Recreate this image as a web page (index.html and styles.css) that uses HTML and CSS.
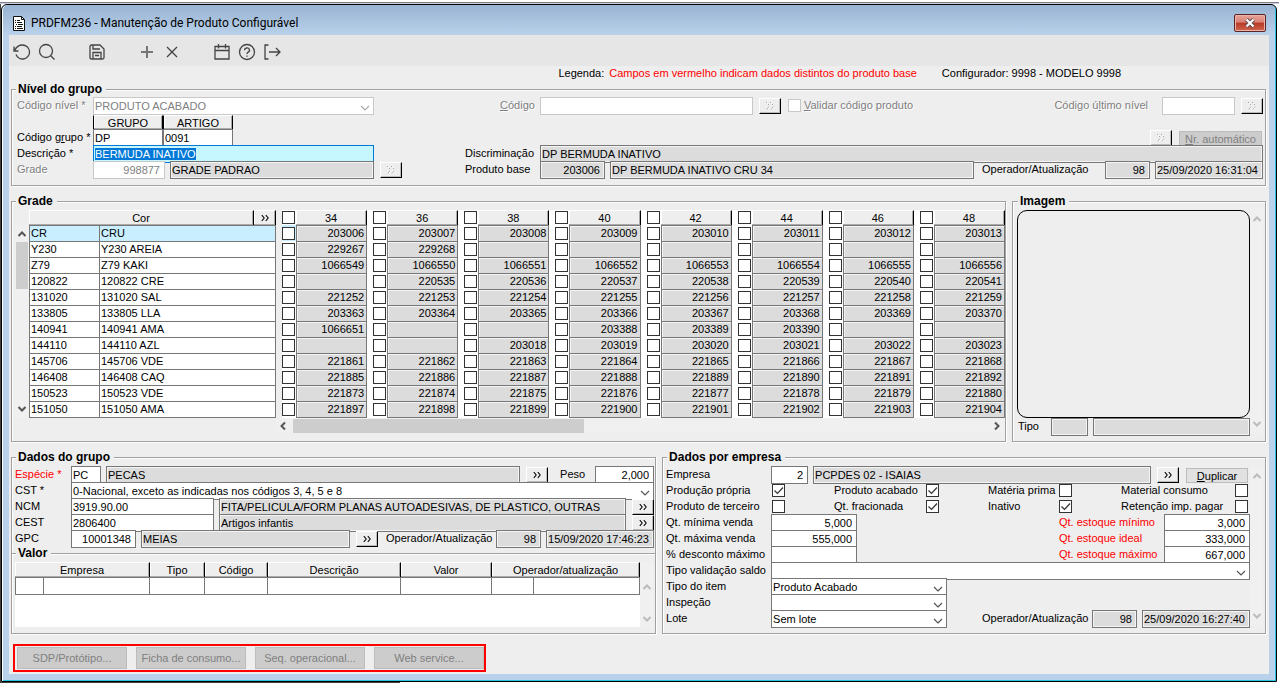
FILE: index.html
```
<!DOCTYPE html>
<html lang="pt-BR">

<head>
    <title>PRDFM236 - Manutenção de Produto Configurável</title>
    <meta charset="UTF-8">
    <meta name="viewport" content="width=device-width, initial-scale=1.0">
    <link rel="stylesheet" href="styles.css">
</head>

<body>
    <svg class="symbols" aria-hidden="true">
        <symbol id="more" viewBox="0 0 12 10"><path d="M2 1.500l3 3.500-3 3.500M7 1.500l3 3.500-3 3.500" fill="none" stroke="currentColor" stroke-width="1.300"/></symbol>
        <symbol id="more-off" viewBox="0 0 12 10"><path d="M2 1.500h1M4 3.500h1M6 1.500h1M8 3.500h1M5 5.500l-2 3M10 5.500l-3 3" fill="none" stroke="#a8a8a8"/><path d="M3 2.500h1M7 2.500h1M6 5.500l-2 3M11 5.500l-3 3" fill="none" stroke="#fff"/></symbol>
        <symbol id="up" viewBox="0 0 10 8"><path d="M1.500 6L5 2.500 8.500 6" fill="none" stroke="currentColor" stroke-width="2"/></symbol>
        <symbol id="down" viewBox="0 0 10 8"><path d="M1.500 2L5 5.500 8.500 2" fill="none" stroke="currentColor" stroke-width="2"/></symbol>
        <symbol id="left" viewBox="0 0 8 10"><path d="M6 1.500L2.500 5 6 8.500" fill="none" stroke="currentColor" stroke-width="2"/></symbol>
        <symbol id="right" viewBox="0 0 8 10"><path d="M2 1.500L5.500 5 2 8.500" fill="none" stroke="currentColor" stroke-width="2"/></symbol>
    </svg>

    <div class="window">
        <header class="titlebar">
            <svg class="doc-icon" viewBox="0 0 12 15"><path d="M.5.5h8l3 3v11H.5z" fill="#fff" stroke="#111"/><path d="M8.500.5v3h3M2 4.500h1M4 4.500h3M2 6.500h1M4 6.500h5M3 8.500h1M5 8.500h5M2 10.500h1M4 10.500h5M2 12.500h1M4 12.500h6" fill="none" stroke="#111"/></svg>
            <h1>PRDFM236 - Manutenção de Produto Configurável</h1>
            <button class="close" aria-label="Fechar">
                <svg viewBox="0 0 12 10"><path d="M2.500 1.500l7 7M9.500 1.500l-7 7" stroke="#5c4a50" stroke-width="4"/><path d="M2.500 1.500l7 7M9.500 1.500l-7 7" stroke="#fff" stroke-width="2.200"/></svg>
            </button>
        </header>

        <main>
            <div class="toolbar">
                <button aria-label="Desfazer"><svg viewBox="0 0 18 18"><path d="M1 3.500v4.500h4.500M1.500 7.500C3.500 3.500 6.500 2 9.500 2a7 7 0 1 1-6.500 9.500"/></svg></button>
                <button aria-label="Pesquisar"><svg viewBox="0 0 18 18"><circle cx="8" cy="8" r="6.500"/><path d="M12.700 12.700L16.500 16.500"/></svg></button>
                <button class="gap-before" aria-label="Salvar"><svg viewBox="0 0 18 18"><path d="M2 3.500Q2 2 3.500 2H12l4 4v8.500q0 1.500-1.500 1.500h-11Q2 16 2 14.500zM5 16V9.500h8V16M5 2v4h7M7 12.500h4"/></svg></button>
                <button class="gap-before" aria-label="Incluir"><svg viewBox="0 0 18 18"><path class="thick" d="M9 3v12M3 9h12"/></svg></button>
                <button aria-label="Excluir"><svg viewBox="0 0 18 18"><path d="M4 4l10 10M14 4L4 14"/></svg></button>
                <button class="gap-before" aria-label="Calendário"><svg viewBox="0 0 18 18"><path d="M2 3.500h14V16H2zM2 7.500h14M5.500 1v4.500M12.500 1v4.500"/></svg></button>
                <button aria-label="Ajuda"><svg viewBox="0 0 18 18"><circle cx="9" cy="9" r="7.500"/><path d="M6.500 7.200a2.500 2.200 0 1 1 3.700 1.900Q9 9.800 9 11M9 12.500v1.200"/></svg></button>
                <button aria-label="Sair"><svg viewBox="0 0 18 18"><path d="M5.500 2H2v14h3.500M6 9h10.500M13 5l4 4-4 4"/></svg></button>
            </div>

            <div class="notice">
                <span>Legenda:</span>
                <span class="red">Campos em vermelho indicam dados distintos do produto base</span>
                <span class="config">Configurador: 9998 - MODELO 9998</span>
            </div>

            <fieldset class="level">
                <legend>Nível do grupo</legend>
                <div class="row">
                    <label class="off" for="codNivel">Código nível *</label>
                    <select id="codNivel" class="w-select off" disabled><option>PRODUTO ACABADO</option></select>
                    <label class="off code" for="codigo"><u>C</u>ódigo</label>
                    <input id="codigo" class="w-code off" disabled>
                    <button class="more" disabled aria-label="Buscar código"><svg><use href="#more-off"/></svg></button>
                    <input id="validar" type="checkbox" class="off" disabled>
                    <label class="off validate" for="validar"><u>V</u>alidar código produto</label>
                    <label class="off push last-level" for="ultNivel">Código ú<u>l</u>timo nível</label>
                    <input id="ultNivel" class="w-last off" disabled>
                    <button class="more" disabled aria-label="Buscar último nível"><svg><use href="#more-off"/></svg></button>
                </div>
                <div class="row">
                    <span class="label"></span>
                    <span class="head w-part">GRUPO</span>
                    <span class="head w-part">ARTIGO</span>
                </div>
                <div class="row">
                    <label for="codGrupo">Código g<u>r</u>upo *</label>
                    <input id="codGrupo" class="w-part" value="DP">
                    <input class="w-part" value="0091" aria-label="Artigo">
                    <button class="more push" disabled aria-label="Buscar número"><svg><use href="#more-off"/></svg></button>
                    <button class="text-btn auto" disabled><u>N</u>r. automático</button>
                </div>
                <div class="row">
                    <label for="descricao">Descrição *</label>
                    <input id="descricao" class="w-desc focus" value="BERMUDA INATIVO">
                    <label class="second wide-gap" for="discr">Discriminação</label>
                    <input id="discr" class="grow ro" value="DP BERMUDA INATIVO" readonly>
                </div>
                <div class="row">
                    <label class="off" for="gradeCod">Grade</label>
                    <input id="gradeCod" class="w-grade num off" value="998877" disabled>
                    <input class="w-grade-name ro gap" value="GRADE PADRAO" readonly aria-label="Nome da grade">
                    <button class="more" disabled aria-label="Buscar grade"><svg><use href="#more-off"/></svg></button>
                    <label class="second base-gap" for="base">Produto base</label>
                    <input id="base" class="w-65 num ro" value="203006" readonly>
                    <input class="grow ro gap" value="DP BERMUDA INATIVO CRU 34" readonly aria-label="Nome do produto base">
                    <label class="oper" for="op1">Operador/Atualização</label>
                    <input id="op1" class="w-op num ro" value="98" readonly>
                    <input class="w-date ro gap" value="25/09/2020 16:31:04" readonly aria-label="Atualização">
                </div>
            </fieldset>

            <div class="columns">
                <fieldset class="grade grow">
                    <legend>Grade</legend>
                    <div class="grade-body">
                        <div class="vscroll active">
                            <svg><use href="#up"/></svg>
                            <span class="thumb"></span>
                            <svg><use href="#down"/></svg>
                        </div>
                        <table class="colors">
                            <colgroup><col class="c-code"><col><col class="c-more"></colgroup>
                            <thead><tr><th colspan="2"><span class="head">Cor</span></th><th><button class="head" aria-label="Buscar cor"><svg><use href="#more"/></svg></button></th></tr></thead>
                            <tbody id="colorRows"></tbody>
                        </table>
                        <div class="grow">
                            <table class="sizes">
                                <thead><tr id="sizeHead"></tr></thead>
                                <tbody id="sizeRows"></tbody>
                            </table>
                            <div class="hscroll">
                                <svg><use href="#left"/></svg>
                                <span class="track"><span class="thumb"></span></span>
                                <svg><use href="#right"/></svg>
                            </div>
                        </div>
                    </div>
                </fieldset>

                <fieldset class="image">
                    <legend>Imagem</legend>
                    <div class="with-scroll">
                        <div class="grow">
                            <div class="picture"></div>
                            <div class="row">
                                <label for="tipoImg">Tipo</label>
                                <input id="tipoImg" class="w-tipo ro" readonly>
                                <input class="grow ro gap" readonly aria-label="Descrição do tipo">
                            </div>
                        </div>
                        <div class="vscroll"><svg><use href="#up"/></svg><svg><use href="#down"/></svg></div>
                    </div>
                </fieldset>
            </div>

            <div class="columns">
                <div class="left-col">
                    <fieldset class="group">
                        <legend>Dados do grupo</legend>
                        <div class="row">
                            <label class="red" for="especie">Espécie *</label>
                            <input id="especie" class="w-30" value="PC">
                            <input class="grow ro gap" value="PECAS" readonly aria-label="Nome da espécie">
                            <button class="more" aria-label="Buscar espécie"><svg><use href="#more"/></svg></button>
                            <label class="peso" for="peso">Peso</label>
                            <input id="peso" class="w-peso num" value="2,000">
                        </div>
                        <div class="row">
                            <label for="cst">CST *</label>
                            <select id="cst" class="grow"><option>0-Nacional, exceto as indicadas nos códigos 3, 4, 5 e 8</option></select>
                        </div>
                        <div class="row">
                            <label for="ncm">NCM</label>
                            <input id="ncm" class="w-ncm" value="3919.90.00">
                            <input class="grow ro gap" value="FITA/PELICULA/FORM PLANAS AUTOADESIVAS, DE PLASTICO, OUTRAS" readonly aria-label="Descrição NCM">
                            <button class="more" aria-label="Buscar NCM"><svg><use href="#more"/></svg></button>
                        </div>
                        <div class="row">
                            <label for="cest">CEST</label>
                            <input id="cest" class="w-ncm" value="2806400">
                            <input class="grow ro gap" value="Artigos infantis" readonly aria-label="Descrição CEST">
                            <button class="more" aria-label="Buscar CEST"><svg><use href="#more"/></svg></button>
                        </div>
                        <div class="row">
                            <label for="gpc">GPC</label>
                            <input id="gpc" class="w-65 num" value="10001348">
                            <input class="grow ro gap" value="MEIAS" readonly aria-label="Descrição GPC">
                            <button class="more" aria-label="Buscar GPC"><svg><use href="#more"/></svg></button>
                            <label class="oper" for="op2">Operador/Atualização</label>
                            <input id="op2" class="w-op num ro" value="98" readonly>
                            <input class="w-date ro gap" value="15/09/2020 17:46:23" readonly aria-label="Atualização do grupo">
                        </div>
                    </fieldset>
                    <fieldset class="value">
                        <legend>Valor</legend>
                        <div class="with-scroll">
                            <div class="value-list grow">
                                <table>
                                    <colgroup><col class="v-28"><col><col class="v-55"><col class="v-63"><col class="v-133"><col class="v-91"><col class="v-42"><col class="v-106"></colgroup>
                                    <thead>
                                        <tr>
                                            <th colspan="2"><span class="head">Empresa</span></th>
                                            <th><span class="head">Tipo</span></th>
                                            <th><span class="head">Código</span></th>
                                            <th><span class="head">Descrição</span></th>
                                            <th><span class="head">Valor</span></th>
                                            <th colspan="2"><span class="head">Operador/atualização</span></th>
                                        </tr>
                                    </thead>
                                    <tbody><tr><td></td><td></td><td></td><td></td><td></td><td></td><td></td><td></td></tr></tbody>
                                </table>
                            </div>
                            <div class="vscroll"><svg><use href="#up"/></svg><svg><use href="#down"/></svg></div>
                        </div>
                    </fieldset>
                </div>

                <fieldset class="company">
                    <legend>Dados por empresa</legend>
                    <div class="with-scroll">
                        <div class="grow">
                            <div class="row">
                                <label for="empresa">Empresa</label>
                                <input id="empresa" class="w-emp num" value="2">
                                <input class="grow ro gap" value="PCPDES 02 - ISAIAS" readonly aria-label="Nome da empresa">
                                <button class="more" aria-label="Buscar empresa"><svg><use href="#more"/></svg></button>
                                <button class="text-btn dup"><u>D</u>uplicar</button>
                            </div>
                            <div class="row checks">
                                <label for="c1">Produção própria</label><input id="c1" type="checkbox" checked>
                                <label for="c2">Produto acabado</label><input id="c2" type="checkbox" checked>
                                <label for="c3">Matéria prima</label><input id="c3" type="checkbox">
                                <label for="c4">Material consumo</label><input id="c4" type="checkbox">
                            </div>
                            <div class="row checks">
                                <label for="c5">Produto de terceiro</label><input id="c5" type="checkbox">
                                <label for="c6">Qt. fracionada</label><input id="c6" type="checkbox" checked>
                                <label for="c7">Inativo</label><input id="c7" type="checkbox" checked>
                                <label for="c8">Retenção imp. pagar</label><input id="c8" type="checkbox">
                            </div>
                            <div class="row">
                                <label for="qmin">Qt. mínima venda</label>
                                <input id="qmin" class="w-qty num" value="5,000">
                                <label class="red push" for="emin">Qt. estoque mínimo</label>
                                <input id="emin" class="w-qty num" value="3,000">
                            </div>
                            <div class="row">
                                <label for="qmax">Qt. máxima venda</label>
                                <input id="qmax" class="w-qty num" value="555,000">
                                <label class="red push" for="eideal">Qt. estoque ideal</label>
                                <input id="eideal" class="w-qty num" value="333,000">
                            </div>
                            <div class="row">
                                <label for="desc">% desconto máximo</label>
                                <input id="desc" class="w-qty num">
                                <label class="red push" for="emax">Qt. estoque máximo</label>
                                <input id="emax" class="w-qty num" value="667,000">
                            </div>
                            <div class="row">
                                <label for="saldo">Tipo validação saldo</label>
                                <select id="saldo" class="grow"><option></option></select>
                            </div>
                            <div class="row">
                                <label for="item">Tipo do item</label>
                                <select id="item" class="w-combo"><option>Produto Acabado</option></select>
                            </div>
                            <div class="row">
                                <label for="insp">Inspeção</label>
                                <select id="insp" class="w-combo"><option></option></select>
                            </div>
                            <div class="row">
                                <label for="lote">Lote</label>
                                <select id="lote" class="w-combo"><option>Sem lote</option></select>
                                <label class="oper push" for="op3">Operador/Atualização</label>
                                <input id="op3" class="w-op num ro" value="98" readonly>
                                <input class="w-date ro gap" value="25/09/2020 16:27:40" readonly aria-label="Atualização da empresa">
                            </div>
                        </div>
                        <div class="vscroll"><svg><use href="#up"/></svg><svg><use href="#down"/></svg></div>
                    </div>
                </fieldset>
            </div>

            <div class="actions">
                <button disabled>SDP/Protótipo...</button>
                <button disabled>Ficha de consumo...</button>
                <button disabled>Seq. operacional...</button>
                <button disabled>Web service...</button>
            </div>
        </main>
    </div>

    <script src="grade.js"></script>
</body>

</html>
```

FILE: styles.css
```
* {
    box-sizing: border-box;
}

body {
    margin: 0;
    min-height: 100vh;
    padding: 4px 2px 1px 1px;
    background:
        linear-gradient(#fff 0 2px, #808080 2px 3px, #c9cde6 3px 4px) 0 0 / 100% 4px no-repeat,
        linear-gradient(#404040, #404040) 0 0 / 1px 100% no-repeat,
        linear-gradient(#404040, #404040) 0 100% / 400px 1px no-repeat,
        #fff;
    font: 11px/16px "Liberation Sans", Arial, sans-serif;
    color: #000;
}

button,
input,
select {
    margin: 0;
    font: inherit;
    color: inherit;
    border-radius: 0;
    flex: none;
}

.symbols {
    display: none;
}

.red {
    color: #f00;
}

.window {
    padding: 0 7px 7px;
    background: linear-gradient(#98b3d2, #b9d1ea 30px);
    border: 1px solid #000;
    border-radius: 6px 6px 0 0;
    box-shadow: inset 1px 0 0 #fff, inset -1px -1px 0 #2ac4e0;
}

.titlebar {
    display: flex;
    align-items: center;
    height: 30px;
    padding: 6px 3px 0 4px;
}

.doc-icon {
    width: 12px;
    height: 15px;
}

.titlebar h1 {
    margin: 0 auto 0 6px;
    font: 12px/16px Roboto, sans-serif;
}

.close {
    display: flex;
    align-items: center;
    justify-content: center;
    width: 32px;
    height: 18px;
    padding: 0;
    border: 1px solid #5d2224;
    border-radius: 2px;
    background: linear-gradient(#e8a49a, #d98275 45%, #b83a26 50%, #d0654f);
    box-shadow: inset 0 0 0 1px #e9b5ab;
}

.close svg {
    width: 12px;
    height: 10px;
}

main {
    background: #eee;
    padding: 0 3px 2px 2px;
}

.toolbar {
    display: flex;
    align-items: center;
    gap: 7px;
    height: 31px;
    margin: 0 -3px 0 -2px;
    padding: 2px 4px 0;
    background: #e6e6e6;
}

.toolbar button {
    display: flex;
    padding: 0;
    border: 0;
    background: none;
}

.toolbar .gap-before {
    margin-left: 25px;
}

.toolbar svg {
    width: 18px;
    height: 18px;
    fill: none;
    stroke: #444;
    stroke-width: 1.3;
}

.toolbar .thick {
    stroke: #777;
    stroke-width: 2;
}

.notice {
    display: flex;
    justify-content: flex-end;
    gap: 5px;
    height: 16px;
    padding-right: 145px;
    line-height: 14px;
}

.notice .config {
    margin-left: 20px;
}

/* group boxes */

fieldset {
    min-width: 0;
    margin: 0 0 8px;
    padding: 1px 2px 7px 3px;
    border: 1px solid #a0a0a0;
    box-shadow: 1px 1px 0 #fff, inset 1px 1px 0 #fff;
}

legend {
    margin-left: 1px;
    padding: 0 4px 0 2px;
    background: #eee;
    font: bold 12px/14px "Liberation Sans", Arial, sans-serif;
}

.columns {
    display: flex;
    gap: 6px;
}

.grow {
    flex: 1;
    min-width: 0;
}

/* fields are 2px taller than the row so their borders overlap */
.row {
    display: flex;
    align-items: flex-start;
    height: 16px;
}

.row label,
.row .label {
    flex: none;
}

.row label {
    line-height: 17px;
    white-space: nowrap;
}

.row input,
.row select {
    height: 18px;
    padding: 0 4px 0 1px;
    border: 1px solid #777;
    background-color: #fff;
    outline: 0;
}

.row select {
    appearance: none;
    padding: 0 1px 2px;
    background: #fff url("data:image/svg+xml,%3Csvg xmlns='http://www.w3.org/2000/svg' width='10' height='6'%3E%3Cpath d='M1 1l4 4 4-4' fill='none' stroke='%23555' stroke-width='1.2'/%3E%3C/svg%3E") no-repeat right 3px bottom 3px;
}

.row select:disabled {
    padding-bottom: 0;
    background-image: url("data:image/svg+xml,%3Csvg xmlns='http://www.w3.org/2000/svg' width='10' height='6'%3E%3Cpath d='M1 1l4 4 4-4' fill='none' stroke='%23aaa' stroke-width='1.2'/%3E%3C/svg%3E");
}

.row .ro {
    background-color: #dcdcdc;
    box-shadow: inset 0 0 0 1px #f4f4f4;
}

.num {
    text-align: right;
}

.row .off {
    color: #808080;
    border-color: #c8c8c8;
    opacity: 1;
}

label.off {
    text-shadow: 1px 1px 0 #fff;
}

.row .gap {
    margin-left: 5px;
}

.row .push {
    margin-left: auto;
}

.row .focus {
    position: relative;
    border-color: #0078d7;
    background-color: #c6f7ff;
}

.focus::selection {
    background: #0078d7;
    color: #fff;
}

.row input[type="checkbox"],
.sizes input {
    appearance: none;
    display: block;
    width: 13px;
    height: 13px;
    padding: 0;
    border: 1px solid #333;
    background: #fff;
}

.row input[type="checkbox"] {
    margin: 2px 0 0 1px;
}

.row input[type="checkbox"]:disabled {
    border-color: #c8c8c8;
}

.row input[type="checkbox"]:checked {
    background: #fff url("data:image/svg+xml,%3Csvg xmlns='http://www.w3.org/2000/svg' width='11' height='11'%3E%3Cpath d='M1.500 5.500l3 3 5.500-6' fill='none' stroke='%23333' stroke-width='1.2'/%3E%3C/svg%3E") no-repeat center;
}

.head {
    display: flex;
    align-items: center;
    justify-content: center;
    width: 100%;
    height: 15px;
    padding: 0;
    border: 0;
    border-top: 1px solid #fff;
    border-right: 1px solid #000;
    background: #eee;
    box-shadow: inset -1px -1px 0 #aaa, inset 1px 0 0 #fff;
    font-weight: normal;
}

.more {
    display: flex;
    align-items: center;
    justify-content: center;
    width: 22px;
    height: 16px;
    margin: 1px 0 0 6px;
    padding: 0;
    border: 1px solid #000;
    border-color: #fff #000 #000 #fff;
    background: #eee;
    box-shadow: inset -1px -1px 0 #bbb;
}

.more svg,
.head svg {
    width: 10px;
    height: 8px;
}

.more:disabled svg {
    width: 12px;
    height: 10px;
}

.text-btn {
    height: 15px;
    padding: 0;
    border: 1px solid #bcbcbc;
    background: #e1e1e1;
    line-height: 12px;
}

.text-btn:disabled {
    background: #ccc;
    color: #808080;
}

/* level group */

.level {
    padding-bottom: 8px;
}

.level .row > :first-child {
    width: 76px;
}

.level .row {
    margin-left: 2px;
    position: relative;
}

.level .row .w-select,
.level .w-desc {
    width: 281px;
}

.row .code {
    margin: 0 5px 0 126px;
}

.w-code {
    width: 213px;
}

.row input.off[type="checkbox"] {
    margin-left: 7px;
}

.validate {
    margin-left: 3px;
}

.last-level {
    margin-right: 14px;
}

.w-last {
    width: 73px;
}

.level .w-part {
    width: 70px;
}

.level span.w-part {
    margin-top: 2px;
    height: 14px;
    border-left: 1px solid #000;
}

.level .auto {
    width: 83px;
    margin: 2px 1px 0 7px;
}

.second {
    width: 75px;
}

.wide-gap {
    margin-left: 91px;
}

.w-grade {
    width: 72px;
}

.w-grade-name {
    width: 204px;
}

.base-gap {
    margin-left: 63px;
}

.w-65 {
    width: 65px;
}

.oper {
    width: 110px;
}

.level .oper {
    width: 123px;
}

.group .oper,
.level .oper {
    margin-left: 8px;
}

.w-op {
    width: 45px;
}

.w-date {
    width: 108px;
}

/* scroll bars */

.vscroll {
    display: flex;
    flex-direction: column;
    justify-content: space-between;
    align-items: center;
    width: 13px;
    padding: 6px 0;
    background: #f0f0f0;
    color: #bbb;
}

.vscroll svg {
    width: 10px;
    height: 8px;
    flex: none;
}

.active {
    width: 14px;
    color: #555;
}

.active .thumb {
    width: 12px;
    height: 47px;
    margin: 4px 0 auto;
    background: #cdcdcd;
}

.hscroll {
    display: flex;
    align-items: center;
    height: 15px;
    padding: 0 4px 0 3px;
    background: #f0f0f0;
    color: #555;
}

.hscroll svg {
    width: 8px;
    height: 10px;
}

.track {
    flex: 1;
    margin: 0 6px;
}

.track .thumb {
    display: block;
    width: 42%;
    height: 14px;
    background: #cdcdcd;
}

/* colour and size grid */

.grade-body,
.with-scroll {
    display: flex;
}

.grade {
    padding-right: 0;
}

.grade-body {
    padding-top: 1px;
    align-items: flex-start;
}

.grade-body .vscroll {
    height: 193px;
    margin-top: 15px;
    padding: 5px 0;
}

table {
    width: 100%;
    table-layout: fixed;
    border-collapse: separate;
    border-spacing: 0;
}

th,
td {
    height: 16px;
    padding: 0;
    line-height: 15px;
    white-space: nowrap;
}

th {
    height: 15px;
}

.colors {
    flex: none;
    width: 247px;
}

.c-code {
    width: 70px;
}

.c-more {
    width: 22px;
}

.colors td {
    border-top: 1px solid #777;
    border-left: 1px solid #777;
    padding-left: 1px;
    background: #fff;
}

.colors td:last-child {
    border-right: 1px solid #777;
}

.colors tr:last-child td,
.sizes tr:last-child .code-cell {
    height: 17px;
    border-bottom: 1px solid #777;
}

.colors .current td,
.sizes .current td:first-child {
    background: #c9eeff;
}

.sizes {
    background: linear-gradient(90deg, #eee 6px, #fff 6px);
}

.sizes .check,
.sizes .current td:first-child {
    width: 20px;
    padding-left: 6px;
    background-clip: content-box;
}

.sizes .code-cell {
    border: 1px solid #777;
    border-bottom: 0;
    padding-right: 2px;
    background: #dcdcdc;
    box-shadow: inset 1px 1px 0 #f4f4f4;
    text-align: right;
}

/* picture */

.image {
    width: 254px;
    padding-left: 4px;
}

.image .row label {
    width: 34px;
    padding-left: 1px;
}

.w-tipo {
    width: 37px;
}

.picture {
    height: 208px;
    margin-top: 1px;
    border: 1px solid #000;
    border-radius: 10px;
}

/* bottom groups */

.left-col {
    width: 51.4%;
    flex: none;
}

.company {
    flex: 1;
    padding-top: 2px;
    padding-bottom: 6px;
}

.group {
    margin-bottom: 0;
    padding: 2px 1px 7px 3px;
    border-bottom: 0;
    box-shadow: inset 1px 1px 0 #fff, 1px 0 0 #fff;
}

.group .row label:first-child {
    width: 56px;
}

.w-30 {
    width: 30px;
}

.group .peso {
    width: 35px;
    margin-left: 12px;
}

.w-peso {
    width: 59px;
}

.w-ncm {
    width: 143px;
}

.value {
    margin-top: -7px;
    padding-top: 2px;
    padding-bottom: 6px;
}

.value-list {
    background: #fff;
}

.value .vscroll {
    height: 65px;
    padding-top: 21px;
    padding-bottom: 4px;
}

.value td {
    height: 18px;
    border: 1px solid #777;
    border-left: 0;
}

.value td:first-child {
    border-left: 1px solid #777;
}

.v-28 { width: 29px; }
.v-55 { width: 55px; }
.v-63 { width: 63px; }
.v-133 { width: 133px; }
.v-91 { width: 91px; }
.v-42 { width: 42px; }
.v-106 { width: 106px; }

.company .row label:first-child {
    width: 105px;
}

.w-emp {
    width: 37px;
}

.dup {
    width: 62px;
    margin: 2px 2px 0 7px;
}

.row.checks {
    display: grid;
    grid-template-columns: 105px 63px 91px 63px 70px 63px 1fr 16px;
}

.w-qty {
    width: 86px;
}

.company .red {
    width: 105px;
}

.w-combo {
    width: 176px;
}

/* action buttons */

.actions {
    display: flex;
    gap: 9px;
    width: max-content;
    margin: 2px 0 0 2px;
    padding: 1px 0 1px 2px;
    border: 2px solid #f00;
}

.actions button {
    width: 110px;
    height: 22px;
    padding: 0;
    border: 1px solid #bcbcbc;
    background: #ccc;
    color: #808080;
}
```

FILE: grade.js
```
const sizes = [34, 36, 38, 40, 42, 44, 46, 48];

// código, descrição e os produtos de cada tamanho
const colors = [
    ['CR', 'CRU', 203006, 203007, 203008, 203009, 203010, 203011, 203012, 203013],
    ['Y230', 'Y230 AREIA', 229267, 229268, '', '', '', '', '', ''],
    ['Z79', 'Z79 KAKI', 1066549, 1066550, 1066551, 1066552, 1066553, 1066554, 1066555, 1066556],
    ['120822', '120822 CRE', '', 220535, 220536, 220537, 220538, 220539, 220540, 220541],
    ['131020', '131020 SAL', 221252, 221253, 221254, 221255, 221256, 221257, 221258, 221259],
    ['133805', '133805 LLA', 203363, 203364, 203365, 203366, 203367, 203368, 203369, 203370],
    ['140941', '140941 AMA', 1066651, '', '', 203388, 203389, 203390, '', ''],
    ['144110', '144110 AZL', '', '', 203018, 203019, 203020, 203021, 203022, 203023],
    ['145706', '145706 VDE', 221861, 221862, 221863, 221864, 221865, 221866, 221867, 221868],
    ['146408', '146408 CAQ', 221885, 221886, 221887, 221888, 221889, 221890, 221891, 221892],
    ['150523', '150523 VDE', 221873, 221874, 221875, 221876, 221877, 221878, 221879, 221880],
    ['151050', '151050 AMA', 221897, 221898, 221899, 221900, 221901, 221902, 221903, 221904]
];

document.getElementById('sizeHead').innerHTML = sizes.map(size =>
    `<th class="check"><input type="checkbox" aria-label="Tamanho ${size}"></th><th><span class="head">${size}</span></th>`
).join('');

colors.forEach(([code, name, ...products], i) => {
    const current = i === 0 ? ' class="current"' : '';
    document.getElementById('colorRows').innerHTML +=
        `<tr${current}><td>${code}</td><td colspan="2">${name}</td></tr>`;
    document.getElementById('sizeRows').innerHTML += `<tr${current}>` + products.map((product, n) =>
        `<td class="check"><input type="checkbox" aria-label="${name} ${sizes[n]}"></td><td class="code-cell">${product}</td>`
    ).join('') + '</tr>';
});

// o campo de descrição abre com o texto selecionado
const descricao = document.getElementById('descricao');
descricao.focus();
descricao.select();
```
